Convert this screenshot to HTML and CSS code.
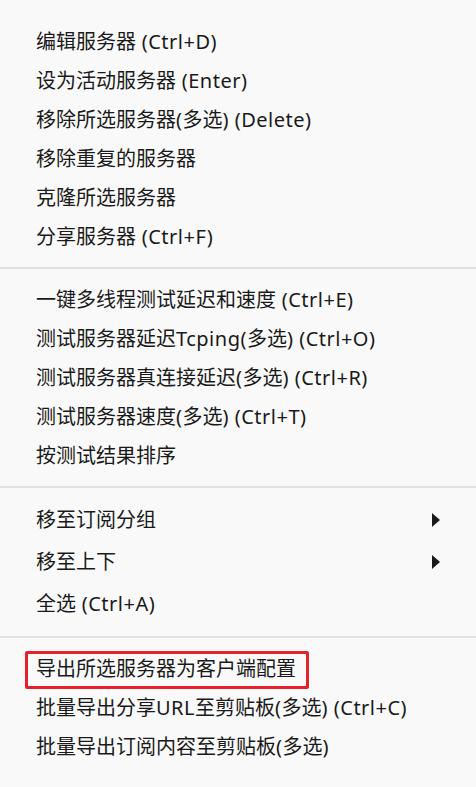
FILE: index.html
```html
<!DOCTYPE html>
<html lang="zh-CN">
<head>
<meta charset="utf-8">
<title>Menu</title>
<link rel="stylesheet" href="styles.css">
</head>
<body>
<div class="menu">
  <div class="group">
    <div class="item">编辑服务器<span class="en"> (Ctrl+D)</span></div>
    <div class="item">设为活动服务器<span class="en"> (Enter)</span></div>
    <div class="item">移除所选服务器<span class="en">(</span>多选<span class="en">) (Delete)</span></div>
    <div class="item">移除重复的服务器</div>
    <div class="item">克隆所选服务器</div>
    <div class="item">分享服务器<span class="en"> (Ctrl+F)</span></div>
  </div>
  <div class="sep"></div>
  <div class="group">
    <div class="item">一键多线程测试延迟和速度<span class="en"> (Ctrl+E)</span></div>
    <div class="item">测试服务器延迟<span class="en">Tcping(</span>多选<span class="en">) (Ctrl+O)</span></div>
    <div class="item">测试服务器真连接延迟<span class="en">(</span>多选<span class="en">) (Ctrl+R)</span></div>
    <div class="item">测试服务器速度<span class="en">(</span>多选<span class="en">) (Ctrl+T)</span></div>
    <div class="item">按测试结果排序</div>
  </div>
  <div class="sep"></div>
  <div class="group tall">
    <div class="item"><span>移至订阅分组</span><span class="arrow"></span></div>
    <div class="item"><span>移至上下</span><span class="arrow"></span></div>
    <div class="item">全选<span class="en"> (Ctrl+A)</span></div>
  </div>
  <div class="sep"></div>
  <div class="group">
    <div class="item marked">导出所选服务器为客户端配置</div>
    <div class="item">批量导出分享<span class="en">URL</span>至剪贴板<span class="en">(</span>多选<span class="en">) (Ctrl+C)</span></div>
    <div class="item">批量导出订阅内容至剪贴板<span class="en">(</span>多选<span class="en">)</span></div>
  </div>
</div>
</body>
</html>
```

FILE: styles.css
```css
html, body {
  margin: 0;
  padding: 0;
  background: #f9f9f9;
}

body {
  width: 476px;
  height: 787px;
  overflow: hidden;
  font-family: "Noto Sans", "Noto Sans CJK SC", sans-serif;
  font-size: 20px;
  color: #1a1a1a;
}

.menu {
  padding-top: 22px;
  display: flex;
  flex-direction: column;
}

.group {
  display: flex;
  flex-direction: column;
}

.item {
  position: relative;
  height: 39px;
  display: flex;
  align-items: center;
  padding: 0 36px;
  white-space: pre;
  line-height: 1;
}

.en {
  letter-spacing: 0.5px;
}

.group.tall .item {
  height: 42px;
}

.arrow {
  margin-left: auto;
  width: 0;
  height: 0;
  border-left: 8px solid #1a1a1a;
  border-top: 7px solid transparent;
  border-bottom: 7px solid transparent;
}

.sep {
  height: 2px;
  margin: 11px 0;
  background: #e1e1e1;
}

.marked::after {
  content: "";
  position: absolute;
  left: 25px;
  top: 2px;
  width: 278px;
  height: 32px;
  border: 3px solid #e8202b;
  border-radius: 2px;
}
```
